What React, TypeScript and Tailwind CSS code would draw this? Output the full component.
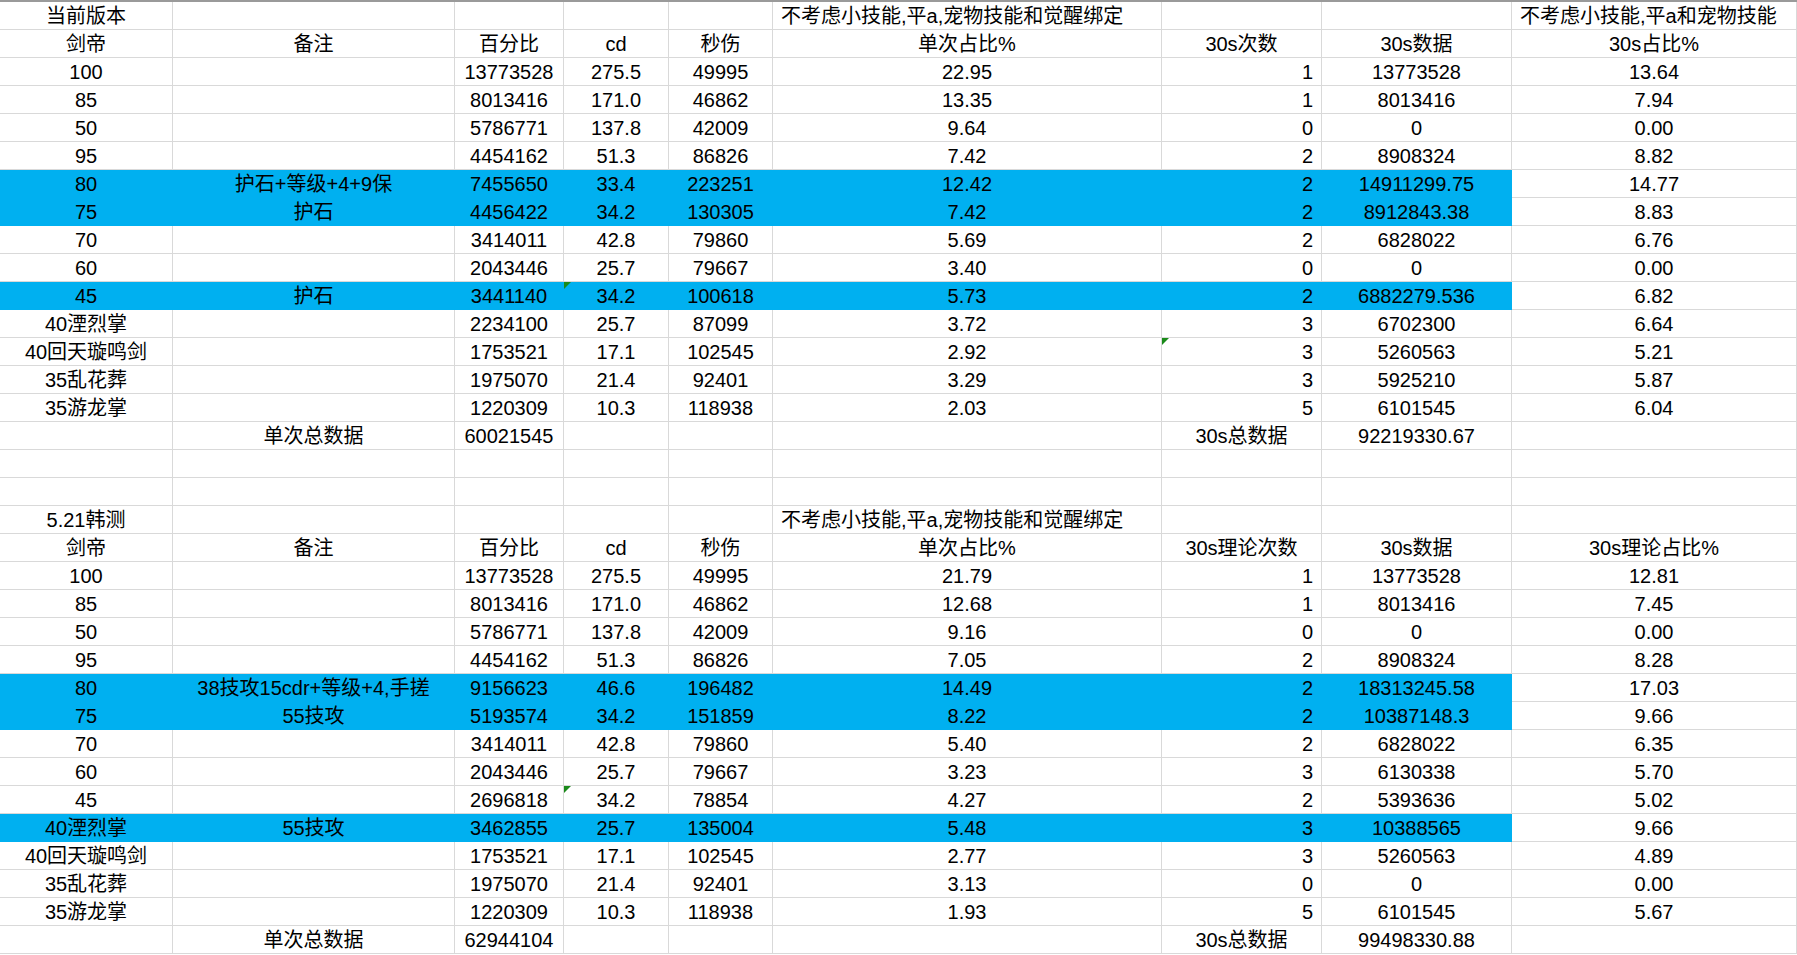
import React from "react";

type Row = { c: string[]; blue?: boolean; tri?: number };
const al = ["c", "c", "c", "c", "c", "c", "r", "c", "c"];

const sec1: Row[] = [
  { c: ["当前版本", "", "", "", "", "L不考虑小技能,平a,宠物技能和觉醒绑定", "", "", "L不考虑小技能,平a和宠物技能"] },
  { c: ["剑帝", "备注", "百分比", "cd", "秒伤", "单次占比%", "C30s次数", "30s数据", "30s占比%"] },
  { c: ["100", "", "13773528", "275.5", "49995", "22.95", "1", "13773528", "13.64"] },
  { c: ["85", "", "8013416", "171.0", "46862", "13.35", "1", "8013416", "7.94"] },
  { c: ["50", "", "5786771", "137.8", "42009", "9.64", "0", "0", "0.00"] },
  { c: ["95", "", "4454162", "51.3", "86826", "7.42", "2", "8908324", "8.82"] },
  { c: ["80", "护石+等级+4+9保", "7455650", "33.4", "223251", "12.42", "2", "14911299.75", "14.77"], blue: true },
  { c: ["75", "护石", "4456422", "34.2", "130305", "7.42", "2", "8912843.38", "8.83"], blue: true },
  { c: ["70", "", "3414011", "42.8", "79860", "5.69", "2", "6828022", "6.76"] },
  { c: ["60", "", "2043446", "25.7", "79667", "3.40", "0", "0", "0.00"] },
  { c: ["45", "护石", "3441140", "34.2", "100618", "5.73", "2", "6882279.536", "6.82"], blue: true, tri: 3 },
  { c: ["40湮烈掌", "", "2234100", "25.7", "87099", "3.72", "3", "6702300", "6.64"] },
  { c: ["40回天璇鸣剑", "", "1753521", "17.1", "102545", "2.92", "3", "5260563", "5.21"], tri: 6 },
  { c: ["35乱花葬", "", "1975070", "21.4", "92401", "3.29", "3", "5925210", "5.87"] },
  { c: ["35游龙掌", "", "1220309", "10.3", "118938", "2.03", "5", "6101545", "6.04"] },
  { c: ["", "单次总数据", "60021545", "", "", "", "C30s总数据", "92219330.67", ""] },
];
const sec2: Row[] = [
  { c: ["5.21韩测", "", "", "", "", "L不考虑小技能,平a,宠物技能和觉醒绑定", "", "", ""] },
  { c: ["剑帝", "备注", "百分比", "cd", "秒伤", "单次占比%", "C30s理论次数", "30s数据", "30s理论占比%"] },
  { c: ["100", "", "13773528", "275.5", "49995", "21.79", "1", "13773528", "12.81"] },
  { c: ["85", "", "8013416", "171.0", "46862", "12.68", "1", "8013416", "7.45"] },
  { c: ["50", "", "5786771", "137.8", "42009", "9.16", "0", "0", "0.00"] },
  { c: ["95", "", "4454162", "51.3", "86826", "7.05", "2", "8908324", "8.28"] },
  { c: ["80", "38技攻15cdr+等级+4,手搓", "9156623", "46.6", "196482", "14.49", "2", "18313245.58", "17.03"], blue: true },
  { c: ["75", "55技攻", "5193574", "34.2", "151859", "8.22", "2", "10387148.3", "9.66"], blue: true },
  { c: ["70", "", "3414011", "42.8", "79860", "5.40", "2", "6828022", "6.35"] },
  { c: ["60", "", "2043446", "25.7", "79667", "3.23", "3", "6130338", "5.70"] },
  { c: ["45", "", "2696818", "34.2", "78854", "4.27", "2", "5393636", "5.02"], tri: 3 },
  { c: ["40湮烈掌", "55技攻", "3462855", "25.7", "135004", "5.48", "3", "10388565", "9.66"], blue: true },
  { c: ["40回天璇鸣剑", "", "1753521", "17.1", "102545", "2.77", "3", "5260563", "4.89"] },
  { c: ["35乱花葬", "", "1975070", "21.4", "92401", "3.13", "0", "0", "0.00"] },
  { c: ["35游龙掌", "", "1220309", "10.3", "118938", "1.93", "5", "6101545", "5.67"] },
  { c: ["", "单次总数据", "62944104", "", "", "", "C30s总数据", "99498330.88", ""] },
];
const empty: Row = { c: ["", "", "", "", "", "", "", "", ""] };
const rows: Row[] = [...sec1, empty, empty, ...sec2];

export default function App() {
  return (
    <div
      className="w-[1797px] h-[955px] overflow-hidden bg-white text-black border-t-2 border-[#9a9a9a]"
      style={{ fontFamily: '"Liberation Sans", "Noto Sans CJK SC", sans-serif' }}
    >
      <div className="grid grid-cols-[173px_282px_109px_105px_104px_389px_160px_190px_285px] auto-rows-[28px] text-[20px] leading-[28px]">
        {rows.map((r, ri) =>
          r.c.map((v, ci) => {
            let text = v;
            let a = al[ci];
            if (v.startsWith("L")) { text = v.slice(1); a = "l"; }
            else if (v.startsWith("C")) { text = v.slice(1); a = "c"; }
            const blue = r.blue && ci < 8;
            return (
              <div
                key={ri + "-" + ci}
                className={
                  "relative whitespace-nowrap border-r border-b " +
                  (blue ? "bg-[#00b0f0] border-[#00b0f0] " : "border-[#d9d9d9] ") +
                  (a === "l" ? "pl-2 overflow-visible z-10 " : a === "r" ? "text-right pr-[8px] " : "text-center ")
                }
              >
                {r.tri === ci && (
                  <span className="absolute left-0 top-0 w-0 h-0 border-t-[7px] border-r-[7px] border-t-[#1a8a1a] border-r-transparent" />
                )}
                {text}
              </div>
            );
          })
        )}
      </div>
    </div>
  );
}
